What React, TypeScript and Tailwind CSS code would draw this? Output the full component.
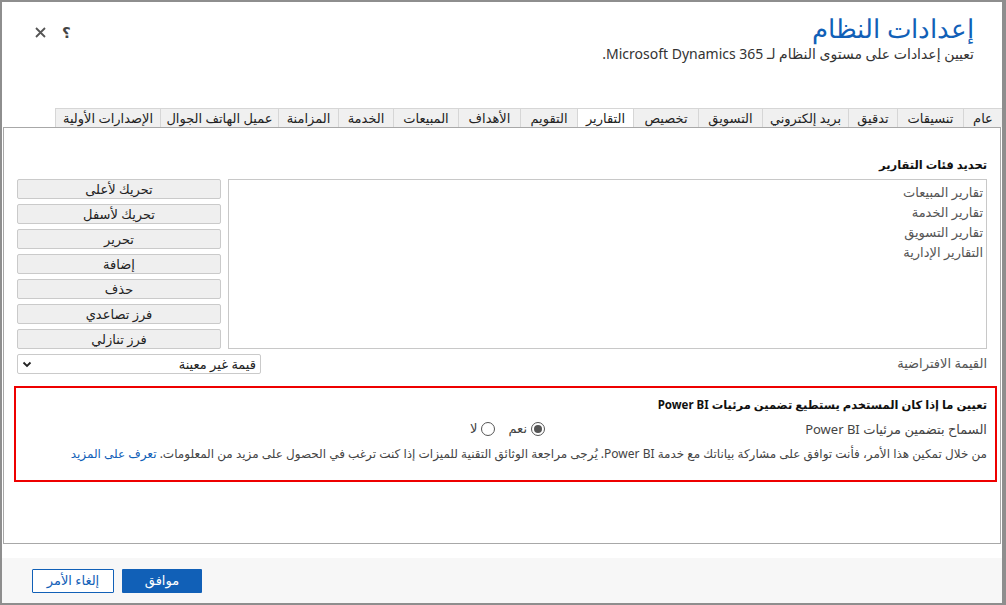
import { useState } from 'react';

const tabs: { label: string; w: string }[] = [
  { label: 'عام', w: 'w-[39px]' },
  { label: 'تنسيقات', w: 'w-[66px]' },
  { label: 'تدقيق', w: 'w-[49px]' },
  { label: 'بريد إلكتروني', w: 'w-[86px]' },
  { label: 'التسويق', w: 'w-[64px]' },
  { label: 'تخصيص', w: 'w-[65px]' },
  { label: 'التقارير', w: 'w-[56px]' },
  { label: 'التقويم', w: 'w-[57px]' },
  { label: 'الأهداف', w: 'w-[62px]' },
  { label: 'المبيعات', w: 'w-[65px]' },
  { label: 'الخدمة', w: 'w-[55px]' },
  { label: 'المزامنة', w: 'w-[60px]' },
  { label: 'عميل الهاتف الجوال', w: 'w-[118px]' },
  { label: 'الإصدارات الأولية', w: 'w-[105px]' },
];

const categories = ['تقارير المبيعات', 'تقارير الخدمة', 'تقارير التسويق', 'التقارير الإدارية'];

const actions = ['تحريك لأعلى', 'تحريك لأسفل', 'تحرير', 'إضافة', 'حذف', 'فرز تصاعدي', 'فرز تنازلي'];

function Radio({ checked, label, onClick }: { checked: boolean; label: string; onClick: () => void }) {
  return (
    <button onClick={onClick} className="flex items-center gap-[4px] text-[13px] text-[#444]">
      <span className="flex h-[14px] w-[14px] items-center justify-center rounded-full border border-[#555] bg-white">
        {checked && <span className="h-[8px] w-[8px] rounded-full bg-[#555]" />}
      </span>
      <span>{label}</span>
    </button>
  );
}

export default function App() {
  const [activeTab, setActiveTab] = useState('التقارير');
  const [allowEmbed, setAllowEmbed] = useState(true);

  return (
    <div
      className="h-[605px] w-[1006px] bg-[#8e8e8e] pb-[2px] pl-[2px] pr-[4px] pt-[2px]"
      style={{ fontFamily: '"Segoe UI", "Noto Sans", "DejaVu Sans", sans-serif' }}
    >
      <div dir="rtl" className="flex h-full flex-col bg-white">
        {/* header */}
        <div className="flex h-[106px] items-start justify-between">
          <div className="pr-[28px] pt-[10px]">
            <h1 className="text-[26px] font-light leading-[33px] text-[#1160b7]">إعدادات النظام</h1>
            <p className="text-[14px] leading-[18px] text-[#333]">
              تعيين إعدادات على مستوى النظام لـ Microsoft Dynamics 365.
            </p>
          </div>
          <div className="flex items-center gap-[16px] pl-[33px] pt-[19px] text-[#444]">
            <span className="text-[15px] font-bold">؟</span>
            <svg width="11" height="11" viewBox="0 0 11 11" className="mt-[1px]">
              <path d="M1 1 L10 10 M10 1 L1 10" stroke="#555" strokeWidth="1.8" />
            </svg>
          </div>
        </div>

        {/* tabs */}
        <div className="flex h-[19px] items-stretch">
          {tabs.map((t) => (
            <button
              key={t.label}
              onClick={() => setActiveTab(t.label)}
              className={`${t.w} shrink-0 border-l border-t border-[#d6d6d6] text-[13px] leading-[18px] text-[#222] ${
                activeTab === t.label ? 'bg-white' : 'bg-[#f0f0f0]'
              }`}
            >
              {t.label}
            </button>
          ))}
        </div>

        {/* panel */}
        <div className="mx-[1px] h-[417px] border border-[#a8a8a8] bg-white">
          <div className="px-[13px] pt-[29px]">
            <div className="text-[11.5px] font-bold leading-[16px] text-[#111]">تحديد فئات التقارير</div>
            <div className="mt-[6px] flex gap-[7px]">
              <div className="h-[170px] flex-1 border border-[#c8c8c8] pr-[3px] pt-[2px]">
                {categories.map((c) => (
                  <div key={c} className="text-[13px] leading-[20px] text-[#555]">
                    {c}
                  </div>
                ))}
              </div>
              <div className="flex w-[204px] flex-col gap-[5px]">
                {actions.map((a) => (
                  <button
                    key={a}
                    className="h-[20px] rounded-[2px] border border-[#cacaca] bg-[#efefef] text-[13px] leading-[18px] text-[#222]"
                  >
                    {a}
                  </button>
                ))}
              </div>
            </div>
            <div className="mt-[5px] flex items-center justify-between">
              <span className="text-[13px] text-[#555]">القيمة الافتراضية</span>
              <div className="flex h-[20px] w-[244px] items-center justify-between rounded-[2px] border border-[#cacaca] bg-white pl-[4px] pr-[4px]">
                <span className="text-[13px] leading-[18px] text-[#222]">قيمة غير معينة</span>
                <svg width="10" height="7" viewBox="0 0 10 7">
                  <path d="M1.5 1.5 L5 5 L8.5 1.5" stroke="#222" strokeWidth="1.8" fill="none" />
                </svg>
              </div>
            </div>
          </div>

          <div className="ml-[10px] mr-[3px] mt-[12px] h-[96px] border-2 border-[#ee0000] pr-[8px] pt-[8px]">
            <div className="text-[11.5px] font-bold leading-[18px] text-[#111]">
              تعيين ما إذا كان المستخدم يستطيع تضمين مرئيات Power BI
            </div>
            <div className="mt-[5px] flex items-center">
              <span className="w-[442px] text-[13px] leading-[18px] text-[#444]">السماح بتضمين مرئيات Power BI</span>
              <div className="flex items-center gap-[13px]">
                <Radio checked={allowEmbed} label="نعم" onClick={() => setAllowEmbed(true)} />
                <Radio checked={!allowEmbed} label="لا" onClick={() => setAllowEmbed(false)} />
              </div>
            </div>
            <p className="mt-[6px] text-[12px] leading-[18px] text-[#444]">
              من خلال تمكين هذا الأمر، فأنت توافق على مشاركة بياناتك مع خدمة Power BI. يُرجى مراجعة الوثائق التقنية
              للميزات إذا كنت ترغب في الحصول على مزيد من المعلومات.{' '}
              <a className="text-[#1160b7]">تعرف على المزيد</a>
            </p>
          </div>
        </div>

        {/* footer */}
        <div className="mt-[14px] flex flex-1 items-start justify-end gap-[8px] bg-[#f7f7f7] pl-[30px] pt-[11px]">
          <button className="h-[24px] w-[80px] rounded-[1px] bg-[#1160b7] text-[13px] text-white">موافق</button>
          <button className="h-[24px] w-[82px] rounded-[1px] border border-[#1160b7] bg-white text-[13px] text-[#1160b7]">
            إلغاء الأمر
          </button>
        </div>
      </div>
    </div>
  );
}
